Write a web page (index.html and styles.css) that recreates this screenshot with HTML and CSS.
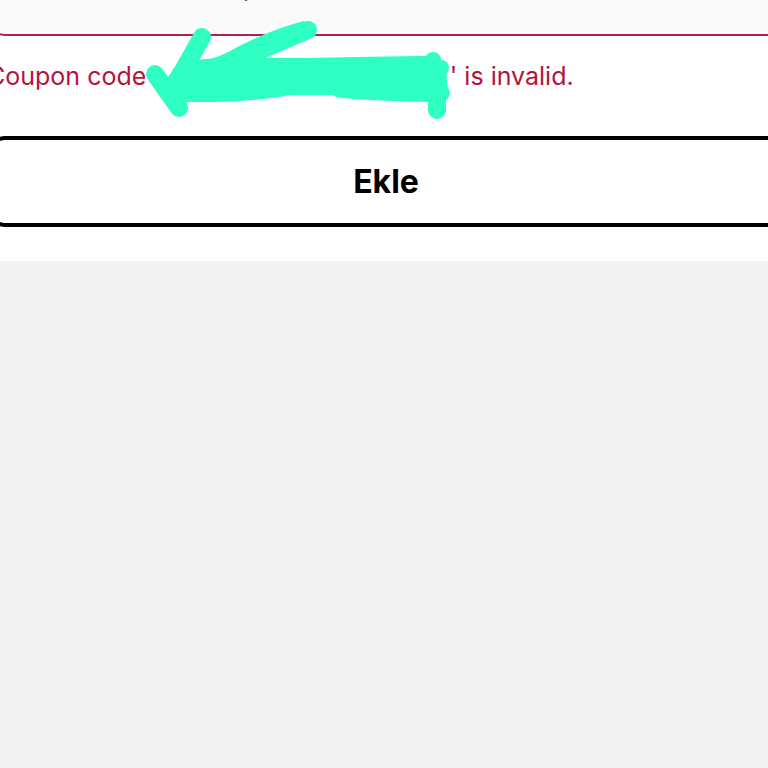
FILE: index.html
```
<!DOCTYPE html>
<html lang="tr">
<head>
    <meta charset="UTF-8">
    <meta name="viewport" content="width=device-width, initial-scale=1.0">
    <title>Ekle</title>
    <link rel="stylesheet" href="styles.css">
</head>
<body>
    <form class="coupon-form">
        <input type="text" class="coupon-input" aria-label="Coupon code" aria-describedby="coupon-error" aria-invalid="true" value="p">
        <p class="error-message" id="coupon-error">
            Coupon code '<span class="code"></span>' is invalid.
            <svg class="marker" viewBox="0 0 310 110" aria-hidden="true">
                <path class="marker-body" d="M14 60L20 59L25 53C27 47 32 45 37 44L58 39C66 39 71 37 80 33Q122 10 158 1L166 18Q148 26 119 38L160 38L209 37L280 36L300 48L301 60L302 76L283 82Q203 80 190 77L187 75L144 75Q104 83 42 82L24 90Z"/>
                <path class="marker-line" d="M56 17L34 56M9 54L33 88M162 10L158 11M291 68V90"/>
                <circle class="marker-body" cx="287" cy="40" r="8"/>
                <circle class="marker-body" cx="295" cy="48" r="8"/>
                <circle class="marker-body" cx="296" cy="73" r="8"/>
            </svg>
        </p>
        <button type="submit" class="add-button">Ekle</button>
    </form>
</body>
</html>
```
FILE: styles.css
```
body {
    margin: 0;
    background-color: #f3f3f3;
    font-family: Inter, "Liberation Sans", sans-serif;
    overflow-x: hidden;
}
.coupon-form {
    margin: -62px -17px 0 -13px;
    padding-bottom: 34px;
    background-color: #fff;
}
.coupon-input {
    display: block;
    box-sizing: border-box;
    width: 100%;
    height: 98px;
    padding: 0 20px 0 254px;
    border: 2px solid #b0234a;
    border-radius: 18px;
    background-color: #fafafa;
    color: #222;
    font-family: inherit;
    font-size: 25px;
}
.error-message {
    position: relative;
    margin: 24px 0 44px;
    color: #b5123e;
    font-size: 25px;
    line-height: 32px;
    white-space: nowrap;
}
.code {
    display: inline-block;
    width: 289px;
}
.marker {
    position: absolute;
    top: -40px;
    left: 159px;
    width: 310px;
    height: 110px;
}
.marker-body {
    fill: #30ffc4;
}
.marker-line {
    fill: none;
    stroke: #30ffc4;
    stroke-width: 18;
    stroke-linecap: round;
    stroke-linejoin: round;
}
.add-button {
    display: block;
    width: 100%;
    height: 91px;
    padding: 0;
    border: 4px solid #000;
    border-radius: 18px;
    background-color: #fff;
    color: #000;
    font-family: inherit;
    font-size: 32px;
    font-weight: 700;
    cursor: pointer;
}
```
